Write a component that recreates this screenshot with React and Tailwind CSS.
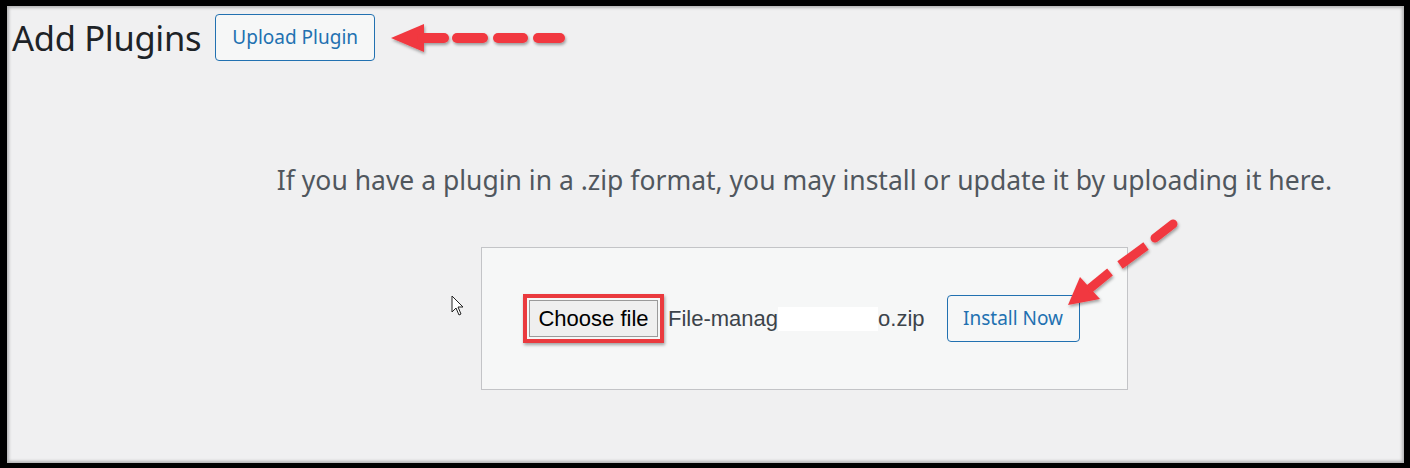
import React from "react";

function Arrows() {
  return (
    <svg className="absolute inset-0 pointer-events-none" width="1410" height="468" viewBox="0 0 1410 468">
      <defs>
        <filter id="sh" x="-20%" y="-20%" width="140%" height="160%">
          <feDropShadow dx="1" dy="2" stdDeviation="1.5" floodColor="#000" floodOpacity="0.35" />
        </filter>
      </defs>
      <g filter="url(#sh)" fill="#f1393f" stroke="#f1393f">
        <polygon points="391,38 424,24 424,52" stroke="none" />
        <line x1="422" y1="38" x2="444" y2="38" strokeWidth="10" strokeLinecap="round" />
        <line x1="457" y1="38" x2="483" y2="38" strokeWidth="10" strokeLinecap="round" />
        <line x1="498" y1="38" x2="523" y2="38" strokeWidth="10" strokeLinecap="round" />
        <line x1="538" y1="38" x2="560" y2="38" strokeWidth="10" strokeLinecap="round" />
      </g>
      <g filter="url(#sh)" fill="#f1393f" stroke="#f1393f">
        <polygon points="1068,305 1080,277 1100,299" stroke="none" />
        <line x1="1088" y1="290" x2="1110" y2="272" strokeWidth="9" strokeLinecap="butt" />
        <line x1="1120" y1="265" x2="1146" y2="246" strokeWidth="9" strokeLinecap="butt" />
        <line x1="1155" y1="238" x2="1173" y2="224" strokeWidth="9" strokeLinecap="round" />
      </g>
    </svg>
  );
}

function Cursor() {
  return (
    <svg className="absolute left-[451px] top-[295px]" width="14" height="22" viewBox="0 0 14 22">
      <path d="M1 1 L1 17 L5 13 L8 20 L10 19 L7 12 L12 12 Z" fill="#fff" stroke="#222" strokeWidth="1" strokeLinejoin="round" />
    </svg>
  );
}

export default function App() {
  return (
    <div className="relative w-[1410px] h-[468px] bg-black pt-[6px] pr-[6px] pb-[5px] pl-[7px]">
      <div
        className="relative h-full w-full bg-[#f0f0f1] shadow-[inset_0_0_3px_2px_rgba(0,0,0,0.25)] flex flex-col"
        style={{ fontFamily: '"Noto Sans", "Open Sans", sans-serif' }}
      >
        <div className="flex items-center pl-[5px] pt-[8px]">
          <h1 className="text-[34.5px] leading-[47px] text-[#1d2327] font-normal tracking-[-0.3px]">Add Plugins</h1>
          <button className="ml-[14px] h-[47px] w-[160px] rounded-[4px] border border-[#2271b1] bg-[#f6f7f7] text-[19px] text-[#2271b1]">
            Upload Plugin
          </button>
        </div>
        <div className="flex flex-col items-center pl-[198px]">
          <p className="mt-[103px] text-[26.5px] leading-[32px] text-[#50575e] whitespace-nowrap">
            If you have a plugin in a .zip format, you may install or update it by uploading it here.
          </p>
          <div className="mt-[51px] w-[647px] h-[143px] border border-[#c3c4c7] bg-[#f6f7f7] flex items-center pl-[41px]">
            <span className="border-[4px] border-[#ea3a3e] p-[2px] shadow-[1px_2px_3px_rgba(0,0,0,0.35)] flex">
              <span
                className="h-[37px] w-[129px] flex items-center justify-center bg-[#efefef] border border-[#9a9a9a] text-[22px] text-black"
                style={{ fontFamily: '"Liberation Sans", Arial, sans-serif' }}
              >
                Choose file
              </span>
            </span>
            <span
              className="ml-[4px] text-[22px] text-[#3c434a] flex items-center"
              style={{ fontFamily: '"Liberation Sans", Arial, sans-serif' }}
            >
              File-manag<span className="inline-block w-[100px] h-[24px] bg-white"></span>o.zip
            </span>
            <button className="ml-[22px] h-[47px] w-[133px] rounded-[4px] border border-[#2271b1] bg-[#f6f7f7] text-[19px] text-[#2271b1]">
              Install Now
            </button>
          </div>
        </div>
      </div>
      <Cursor />
      <Arrows />
    </div>
  );
}
